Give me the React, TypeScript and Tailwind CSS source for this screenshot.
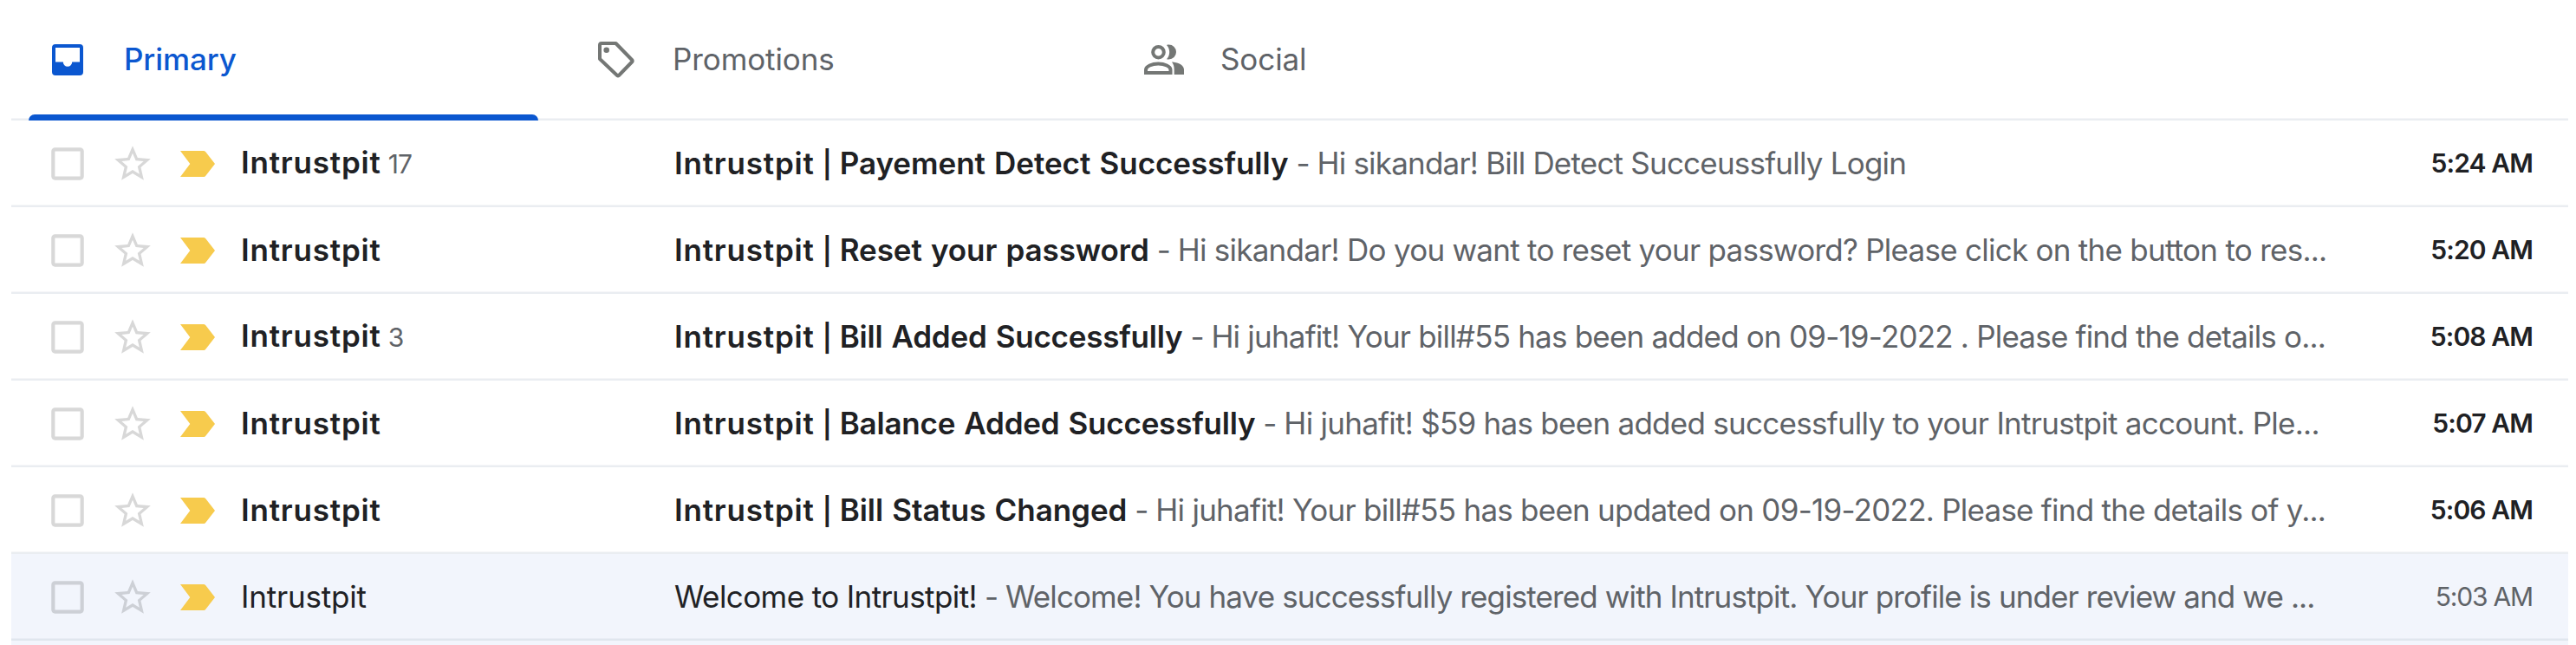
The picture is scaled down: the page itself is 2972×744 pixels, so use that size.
import type { ReactNode } from "react";
import { MdCheckBoxOutlineBlank, MdStarBorder } from "react-icons/md";

type Mail = {
  sender: string;
  count?: number;
  brand?: string;
  subject: string;
  subjectTracking: string;
  snippet: string;
  snippetTracking: string;
  time: string;
  read?: boolean;
};

const mails: Mail[] = [
  {
    sender: "Intrustpit",
    count: 17,
    brand: "Intrustpit",
    subject: "Payement Detect Successfully",
    subjectTracking: "tracking-[-0.04px] [word-spacing:1.5px]",
    snippet: "Hi sikandar! Bill Detect Succeussfully Login",
    snippetTracking: "tracking-[-0.79px]",
    time: "5:24 AM",
  },
  {
    sender: "Intrustpit",
    brand: "Intrustpit",
    subject: "Reset your password",
    subjectTracking: "tracking-[-0.08px] [word-spacing:1.5px]",
    snippet: "Hi sikandar! Do you want to reset your password? Please click on the button to res...",
    snippetTracking: "tracking-[-0.74px]",
    time: "5:20 AM",
  },
  {
    sender: "Intrustpit",
    count: 3,
    brand: "Intrustpit",
    subject: "Bill Added Successfully",
    subjectTracking: "tracking-[-0.22px] [word-spacing:1.5px]",
    snippet: "Hi juhafit! Your bill#55 has been added on 09-19-2022 . Please find the details o...",
    snippetTracking: "tracking-[-0.8px]",
    time: "5:08 AM",
  },
  {
    sender: "Intrustpit",
    brand: "Intrustpit",
    subject: "Balance Added Successfully",
    subjectTracking: "tracking-[-0.21px] [word-spacing:1.5px]",
    snippet: "Hi juhafit! $59 has been added successfully to your Intrustpit account. Ple...",
    snippetTracking: "tracking-[-0.73px]",
    time: "5:07 AM",
  },
  {
    sender: "Intrustpit",
    brand: "Intrustpit",
    subject: "Bill Status Changed",
    subjectTracking: "tracking-[-0.06px] [word-spacing:1.5px]",
    snippet: "Hi juhafit! Your bill#55 has been updated on 09-19-2022. Please find the details of y...",
    snippetTracking: "tracking-[-0.75px]",
    time: "5:06 AM",
  },
  {
    sender: "Intrustpit",
    subject: "Welcome to Intrustpit!",
    subjectTracking: "tracking-[-0.6px]",
    snippet: "Welcome! You have successfully registered with Intrustpit. Your profile is under review and we ...",
    snippetTracking: "tracking-[-0.89px]",
    time: "5:03 AM",
    read: true,
  },
];

function InboxIcon() {
  return (
    <svg viewBox="0 0 36 36" className="size-9" fill="currentColor">
      <path
        fillRule="evenodd"
        d="M4 0h28a4 4 0 0 1 4 4v28a4 4 0 0 1-4 4H4a4 4 0 0 1-4-4V4a4 4 0 0 1 4-4ZM4 4v16.500h8.800a5.200 5.200 0 0 0 10.400 0H32V4Z"
      />
    </svg>
  );
}

function TagIcon() {
  return (
    <svg viewBox="0 0 44 44" className="size-11" fill="none" stroke="currentColor" strokeWidth="4" strokeLinejoin="round">
      <path d="M5 3h16.500L40.500 22.500a1.500 1.500 0 0 1 0 1.500L25 40a1.500 1.500 0 0 1-2 0L3 21V5a2 2 0 0 1 2-2Z" />
      <circle cx="10.700" cy="10.700" r="3.300" fill="currentColor" stroke="none" />
    </svg>
  );
}

function PeopleIcon() {
  return (
    <svg viewBox="0 0 48 36" className="-ml-0.5 h-9 w-12" fill="none" stroke="currentColor" strokeWidth="4">
      <circle cx="17.500" cy="9.200" r="6.300" />
      <path d="M3 33v-3.500c0-4 7-7 14.300-7s14.200 3 14.200 7V33Z" />
      <path
        fill="currentColor"
        stroke="none"
        d="M27 .9c.9-.2 1.700-.3 2.500-.3a8.400 8.400 0 1 1 0 17c-.800 0-1.600-.1-2.500-.3 2.100-2.300 3.200-5 3.200-8.200S29.100 3.200 27 .9ZM34 20.600c7 .8 13 3.900 13 8.700V35h-11.300v-5.700c0-3.500-.7-6.200-2.700-8.700Z"
      />
    </svg>
  );
}

function ImportantMarker() {
  return (
    <svg viewBox="0 0 40 30" className="h-[30px] w-10 shrink-0" fill="#f7cb4d">
      <path d="M0 0h26.500c1.300 0 2.300.5 3 1.500L40 15 29.500 28.500c-.7 1-1.700 1.500-3 1.500H0l11.300-15Z" />
    </svg>
  );
}

function Tab({ icon, label, active }: { icon: ReactNode; label: string; active?: boolean }) {
  return (
    <div
      className={`relative flex h-full w-[632px] items-center pb-1 tracking-[-0.1px] ${
        active ? "font-medium text-[#0b57d0]" : "text-[#5f6368]"
      }`}
    >
      <div className={`flex items-center pt-0.5 ${active ? "w-[83px]" : "-ml-[3px] w-[87px] text-[#747775]"}`}>{icon}</div>
      <span>{label}</span>
      {active && <div className="absolute bottom-0 -left-[27px] h-[7px] w-[588px] rounded-t-[7px] bg-[#0b57d0]" />}
    </div>
  );
}

function MailRow({ mail }: { mail: Mail }) {
  const weight = mail.read ? "font-normal" : "font-semibold";
  return (
    <div
      className={`flex h-[100px] items-center pb-0.5 pl-[45px] ${
        mail.read
          ? "bg-[#f2f5fc] shadow-[inset_0_-2px_#e0e6ee,inset_0_-3px_#e9edf5]"
          : "shadow-[inset_0_-2px_#eaedf1,inset_0_-3px_#f5f6f8]"
      }`}
    >
      <div className={`flex w-[150px] items-center ${mail.read ? "text-[#cdd0d6]" : "text-[#d8d8d8]"}`}>
        <MdCheckBoxOutlineBlank className="mt-0.5 mr-[25px] -ml-[5px] size-[50px] shrink-0" />
        <MdStarBorder className="mt-0.5 size-[50px] shrink-0" />
      </div>
      <div className="w-[70px] pt-px">
        <ImportantMarker />
      </div>
      <div className="flex w-[500px] items-baseline whitespace-pre">
        <span className={`${weight} ${mail.read ? "tracking-[-0.2px]" : "tracking-[0.8px]"}`}>{mail.sender}</span>
        {mail.count && <span className="ml-2 text-[30px] tracking-[-1px] text-[#5f6368]">{mail.count}</span>}
      </div>
      <div className="flex w-[1950px] items-baseline whitespace-pre">
        {mail.brand && (
          <>
            <span className="font-semibold tracking-[0.8px]">{mail.brand}</span>
            <span className="w-[29px] text-center text-[31px] leading-none font-semibold">|</span>
          </>
        )}
        <span className={`${weight} ${mail.subjectTracking}`}>{mail.subject}</span>
        <span className="w-[33px] pl-[9px] text-[#5f6368]">-</span>
        <span className={`text-[#5f6368] ${mail.snippetTracking}`}>{mail.snippet}</span>
      </div>
      <div
        className={`flex-1 pr-[41px] text-right text-[30px] whitespace-pre ${
          mail.read ? "tracking-[-1.2px] text-[#5f6368]" : "font-semibold tracking-[-0.9px]"
        }`}
      >
        {mail.time}
      </div>
    </div>
  );
}

export default function App() {
  return (
    <div className="h-[744px] w-[2972px] overflow-hidden bg-white pr-[9px] pl-[13px] font-['Inter',sans-serif] text-[35px] leading-[50px] text-[#202124]">
      <div className="flex h-[139px] items-center pl-[47px] shadow-[inset_0_-2px_#eaedf1,inset_0_-3px_#f5f6f8]">
        <Tab icon={<InboxIcon />} label="Primary" active />
        <Tab icon={<TagIcon />} label="Promotions" />
        <Tab icon={<PeopleIcon />} label="Social" />
      </div>
      {mails.map((mail) => (
        <MailRow key={mail.time} mail={mail} />
      ))}
      <div className="h-[5px] bg-[#f2f5fc]" />
    </div>
  );
}
